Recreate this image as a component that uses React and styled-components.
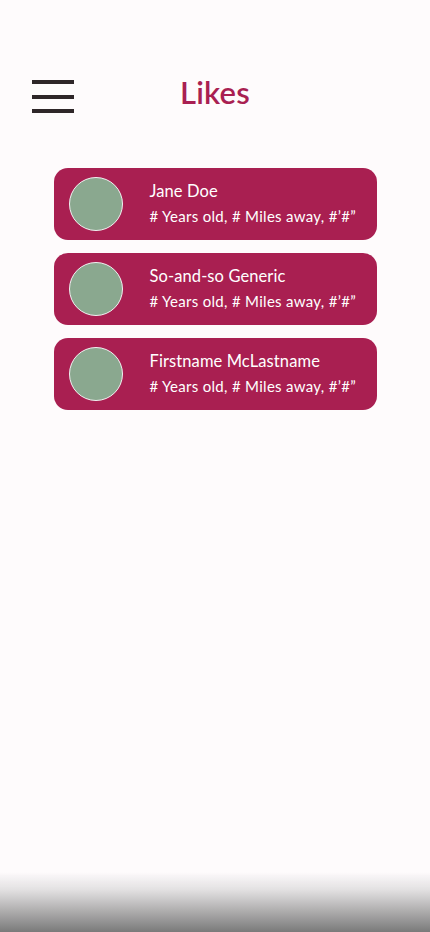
import styled, { createGlobalStyle } from "styled-components";

const GlobalStyle = createGlobalStyle`
  html, body {
    margin: 0;
    padding: 0;
    background: #fefbfc;
  }
  body {
    font-family: "Lato", "Noto Sans", sans-serif;
  }
`;

const likes = [
  { name: "Jane Doe", info: "# Years old, # Miles away, #\u2019#\u201D" },
  { name: "So-and-so Generic", info: "# Years old, # Miles away, #\u2019#\u201D" },
  { name: "Firstname McLastname", info: "# Years old, # Miles away, #\u2019#\u201D" },
];

const App = () => {
  return (
    <Page>
      <GlobalStyle />
      <Header>
        <Menu aria-label="menu">
          <Bar />
          <Bar />
          <Bar />
        </Menu>
        <Title>Likes</Title>
        <span />
      </Header>
      <List>
        {likes.map((like) => (
          <Card key={like.name}>
            <Avatar />
            <Text>
              <Name>{like.name}</Name>
              <Info>{like.info}</Info>
            </Text>
          </Card>
        ))}
      </List>
      <BottomFade />
    </Page>
  );
};

const Page = styled.div`
  min-height: 932px;
  background: #fefbfc;
  padding-top: 74px;
  box-sizing: border-box;
`;

const Header = styled.header`
  display: grid;
  grid-template-columns: 42px 1fr 42px;
  align-items: center;
  padding: 0 32px;
`;

const Menu = styled.div`
  display: flex;
  flex-direction: column;
  gap: 10.5px;
  width: 42px;
  padding: 6px 0 2px;
`;

const Bar = styled.div`
  height: 4px;
  width: 42px;
  background: #2e2628;
`;

const Title = styled.h1`
  margin: 0;
  padding-bottom: 5px;
  text-align: center;
  font-size: 31px;
  line-height: 36px;
  font-weight: 600;
  color: #a91f52;
  letter-spacing: 0.2px;
`;

const List = styled.div`
  display: flex;
  flex-direction: column;
  gap: 13px;
  width: 323px;
  margin: 53px auto 0;
`;

const Card = styled.div`
  display: flex;
  align-items: center;
  height: 72px;
  padding: 0 14px 2px;
  border-radius: 14px;
  background: #a91f51;
  box-sizing: border-box;
`;

const Avatar = styled.div`
  width: 52px;
  height: 52px;
  margin-top: 2px;
  margin-left: 1px;
  border-radius: 50%;
  background: #8aa88f;
  border: 1px solid #f1f1f1;
  flex-shrink: 0;
`;

const Text = styled.div`
  display: flex;
  flex-direction: column;
  gap: 6px;
  margin-left: 27px;
  color: #ffffff;
`;

const Name = styled.div`
  font-size: 16.5px;
  line-height: 20px;
  letter-spacing: 0.1px;
`;

const Info = styled.div`
  font-size: 15px;
  line-height: 18px;
  letter-spacing: 0.3px;
`;

const BottomFade = styled.div`
  position: fixed;
  left: 0;
  right: 0;
  bottom: 0;
  height: 60px;
  background: linear-gradient(to bottom, rgba(254, 251, 252, 0), #e2e0e1 30%, #7a7a7a);
  pointer-events: none;
`;

export default App;
